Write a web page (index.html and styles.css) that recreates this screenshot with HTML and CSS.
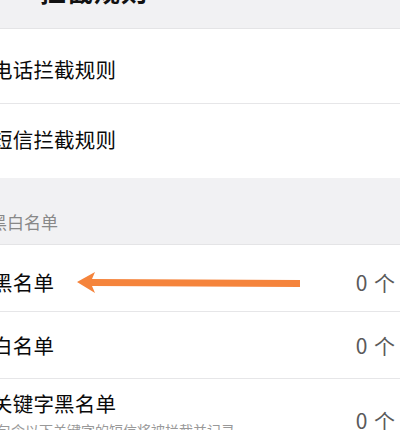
FILE: index.html
```html
<!DOCTYPE html>
<html lang="zh-CN">
<head>
  <meta charset="UTF-8" />
  <meta name="viewport" content="width=device-width, initial-scale=1.0"/>
  <title>拦截规则</title>
  <link rel="stylesheet" href="styles.css">
</head>
<body>
  <header class="page-title">
    <span>拦截规则</span>
  </header>

  <section class="group">
    <div class="row row-first">
      <span class="row-title">电话拦截规则</span>
    </div>
    <div class="row row-second">
      <span class="row-title">短信拦截规则</span>
    </div>
  </section>

  <div class="group-label"><span>黑白名单</span></div>

  <section class="group">
    <div class="row row-short mark">
      <span class="row-title">黑名单</span>
      <svg class="arrow" width="226" height="24" viewBox="0 0 226 24">
        <polygon points="1,12 19,2 16,9 224,10 224,17 16,16 19,23" fill="#f5843c"/>
      </svg>
      <span class="count">0 个</span>
    </div>
    <div class="row row-short">
      <span class="row-title">白名单</span>
      <span class="count">0 个</span>
    </div>
    <div class="row row-tall">
      <div class="row-text">
        <span class="row-title">关键字黑名单</span>
        <span class="row-sub">包含以下关键字的短信将被拦截并记录</span>
      </div>
      <span class="count">0 个</span>
    </div>
  </section>
</body>
</html>
```

FILE: styles.css
```css
html, body {
  margin: 0;
  height: 100%;
  overflow: hidden;
  background-color: #f1f1f3;
  font-family: "Noto Sans CJK SC", "Noto Sans", sans-serif;
  color: #111;
}
.page-title {
  height: 28px;
  overflow: hidden;
  border-bottom: 1px solid #e4e4e6;
}
.page-title span {
  display: block;
  margin-top: -21px;
  padding-left: 40px;
  font-size: 26px;
  line-height: 24px;
  letter-spacing: 1px;
  font-weight: bold;
}
.group {
  background-color: #fff;
}
.row {
  position: relative;
  display: flex;
  align-items: center;
  justify-content: space-between;
  box-sizing: border-box;
  height: 75px;
  border-bottom: 1px solid #e6e6e8;
}
.row:last-child {
  border-bottom: none;
}
.row-first {
  padding-top: 5px;
}
.row-second {
  height: 74px;
  padding-bottom: 4px;
}
.row-short {
  height: 67px;
}
.mark {
  padding-top: 8px;
}
.row-tall {
  height: 90px;
  align-items: flex-start;
}
.row-title {
  margin-left: -8px;
  font-size: 20.5px;
  line-height: 24px;
  color: #0a0a0a;
  letter-spacing: 0.2px;
}
.count {
  padding-right: 4px;
  font-size: 21px;
  color: #5a5a5a;
  letter-spacing: 1px;
}
.row-tall .count {
  margin-top: 26px;
}
.row-text {
  display: flex;
  flex-direction: column;
  padding-top: 12px;
}
.row-sub {
  margin-left: -3px;
  margin-top: 5px;
  font-size: 14px;
  line-height: 20px;
  color: #999;
}
.group-label {
  display: flex;
  align-items: flex-end;
  height: 67px;
  padding-bottom: 10px;
  box-sizing: border-box;
  border-bottom: 1px solid #e4e4e6;
}
.group-label span {
  margin-left: -10px;
  font-size: 17px;
  color: #888;
}
.arrow {
  position: absolute;
  left: 76px;
  top: 25px;
}
```
